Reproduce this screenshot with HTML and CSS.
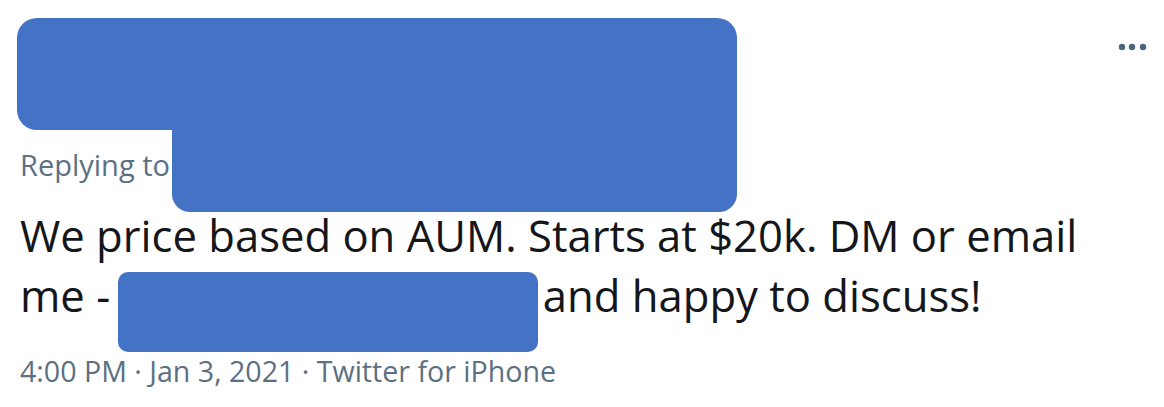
FILE: index.html
```html
<!DOCTYPE html>
<html>
<head>
<meta charset="utf-8">
<link rel="stylesheet" href="styles.css">
</head>
<body>
<div class="tweet">
  <div class="header">
    <div class="author redact-block"></div>
    <svg class="more" width="30" height="8" viewBox="0 0 30 8">
      <circle cx="4" cy="4" r="3.2" fill="#4a6580"/>
      <circle cx="14" cy="4" r="3.2" fill="#4a6580"/>
      <circle cx="25" cy="4" r="3.2" fill="#4a6580"/>
    </svg>
  </div>
  <div class="reply">
    <span class="reply-label">Replying to</span>
    <div class="handle redact-block"></div>
  </div>
  <p class="text">We price based on AUM. Starts at $20k. DM or email me - <span class="email"></span> and happy to discuss!</p>
  <div class="meta">4:00 PM · Jan 3, 2021 · Twitter for iPhone</div>
</div>
</body>
</html>
```
FILE: styles.css
```css
html, body {
  margin: 0;
  padding: 0;
  background: #ffffff;
}
.tweet {
  padding: 18px 16px 0 20px;
  font-family: "Open Sans", "Noto Sans", sans-serif;
}
.header {
  display: flex;
  justify-content: space-between;
  align-items: flex-start;
}
.redact-block {
  background: #4472c4;
}
.author {
  width: 720px;
  height: 112px;
  margin-left: -3px;
  border-radius: 20px 20px 0 20px;
}
.more {
  margin-top: 25px;
}
.reply {
  display: flex;
  align-items: flex-start;
}
.reply-label {
  font-size: 29px;
  line-height: 36px;
  color: #5b7083;
  padding-top: 17px;
  width: 152px;
  white-space: nowrap;
  overflow: hidden;
}
.handle {
  width: 565px;
  height: 82px;
  border-radius: 0 0 18px 18px;
}
.text {
  margin: -7px 0 0 0;
  font-size: 43.6px;
  line-height: 60px;
  color: #141619;
  width: 1090px;
}
.email {
  display: inline-block;
  width: 410px;
  height: 10px;
  position: relative;
}
.email::before {
  content: "";
  position: absolute;
  left: -4px;
  top: -30px;
  width: 420px;
  height: 80px;
  background: #4472c4;
  border-radius: 10px;
}
.meta {
  margin-top: 30px;
  font-size: 28.6px;
  line-height: 32px;
  color: #5b7083;
}
```
